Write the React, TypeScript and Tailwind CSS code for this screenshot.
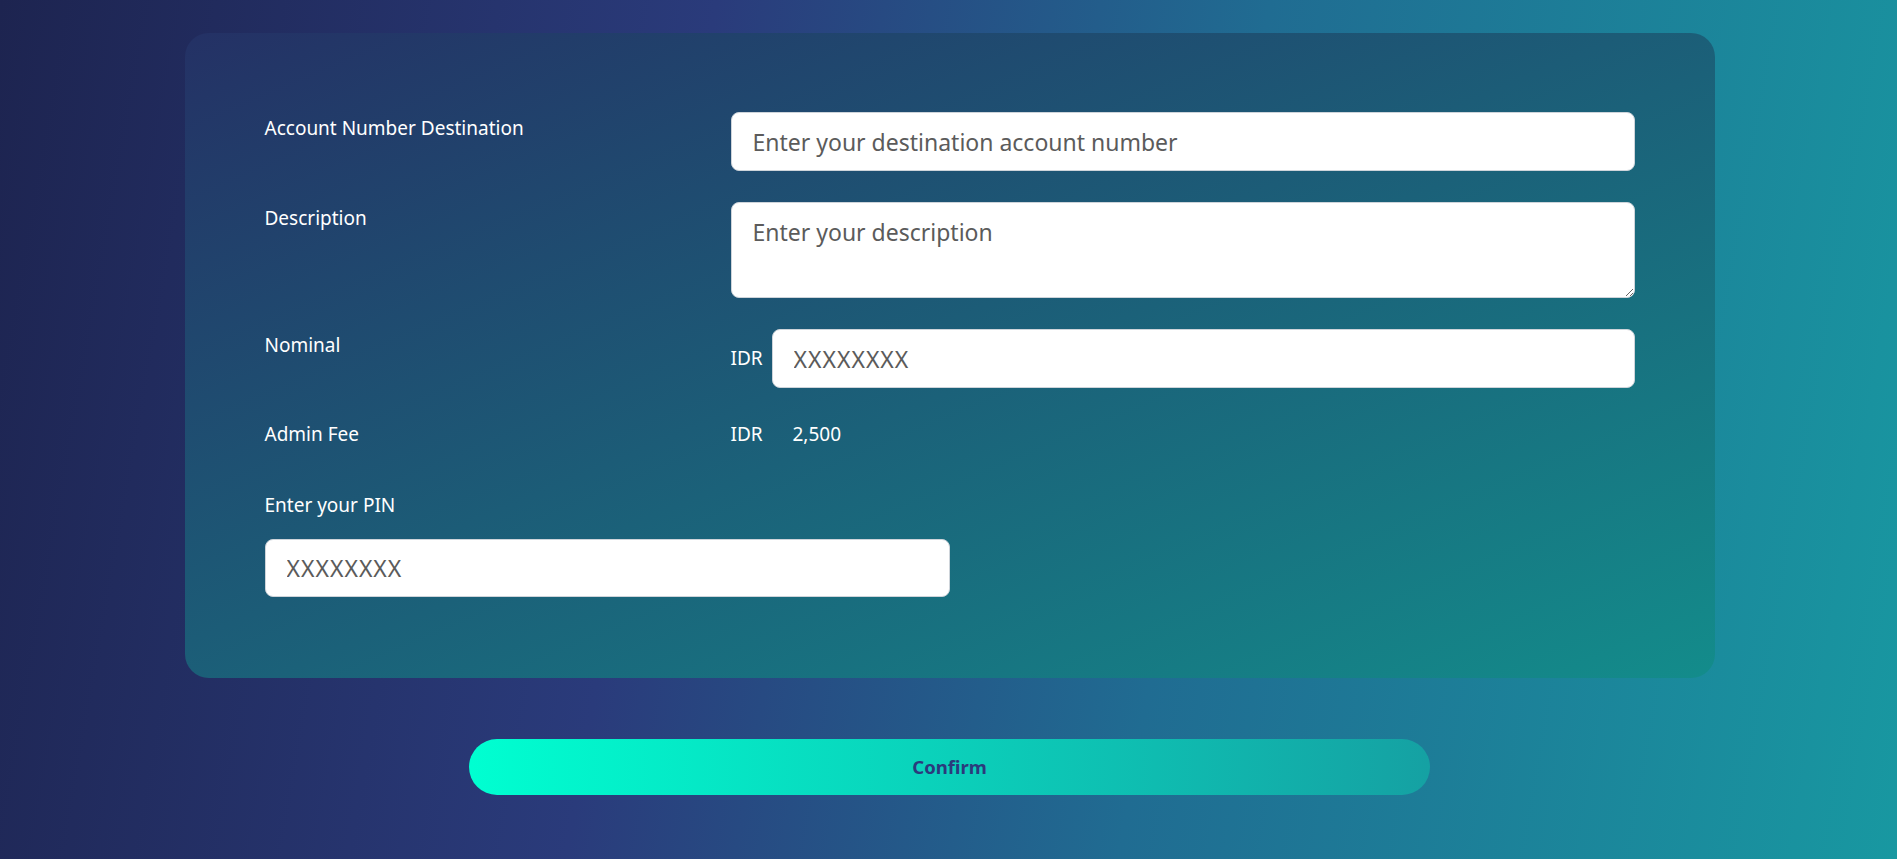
import { useState } from "react";

const font = { fontFamily: '"Noto Sans", "Open Sans", Arial, sans-serif' };

function Label({ children }: { children: React.ReactNode }) {
  return (
    <div className="w-[466px] shrink-0 pt-[3px] text-[19px] leading-[26px] text-white">
      {children}
    </div>
  );
}

const inputCls =
  "w-full rounded-lg border border-[#ced4da] bg-white px-[21px] text-[23px] text-[#212529] outline-none placeholder:text-[#5b5b5b]";

export default function App() {
  const [account, setAccount] = useState("");
  const [desc, setDesc] = useState("");
  const [nominal, setNominal] = useState("");
  const [pin, setPin] = useState("");

  return (
    <div
      style={font}
      className="min-h-screen w-full bg-[linear-gradient(100deg,#1d2450_0%,#2a3b7b_35%,#206c92_62%,#1898a1_100%)] pt-[33px] pb-[63px] pl-[2px]"
    >
      <div className="mx-auto w-[1530px] rounded-3xl bg-[linear-gradient(to_bottom_right,#243165,#138c8b)] px-20 pt-[79px] pb-[81px]">
        <div className="flex flex-col gap-[31px]">
          {/* account */}
          <div className="flex">
            <Label>Account Number Destination</Label>
            <input
              className={`${inputCls} h-[59px]`}
              placeholder="Enter your destination account number"
              value={account}
              onChange={(e) => setAccount(e.target.value)}
            />
          </div>

          {/* description */}
          <div className="flex">
            <Label>Description</Label>
            <textarea
              className={`${inputCls} h-[96px] py-[13px] leading-[32px]`}
              placeholder="Enter your description"
              value={desc}
              onChange={(e) => setDesc(e.target.value)}
            />
          </div>

          {/* nominal */}
          <div className="flex">
            <Label>Nominal</Label>
            <div className="flex flex-1 items-center">
              <span className="w-[41px] shrink-0 text-[19px] text-white">IDR</span>
              <input
                className={`${inputCls} h-[59px] tracking-[1px]`}
                placeholder="XXXXXXXX"
                value={nominal}
                onChange={(e) => setNominal(e.target.value)}
              />
            </div>
          </div>
        </div>

        {/* admin fee */}
        <div className="mt-[30px] flex">
          <Label>Admin Fee</Label>
          <div className="flex pt-[3px] text-[19px] leading-[26px] text-white">
            <span className="w-[62px]">IDR</span>
            <span>2,500</span>
          </div>
        </div>

        {/* pin */}
        <div className="mt-[45px] text-[19px] leading-[26px] text-white">Enter your PIN</div>
        <input
          type="text"
          className={`${inputCls} mt-[21px] h-[58px] !w-1/2 tracking-[1px]`}
          placeholder="XXXXXXXX"
          value={pin}
          onChange={(e) => setPin(e.target.value)}
        />
      </div>

      <div className="mt-[61px] flex justify-center">
        <button className="h-[56px] w-[961px] rounded-full bg-[linear-gradient(to_right,#00ffd1,#15a1a3)] text-[18.5px] font-bold text-[#2b3a7c]">
          Confirm
        </button>
      </div>
    </div>
  );
}
